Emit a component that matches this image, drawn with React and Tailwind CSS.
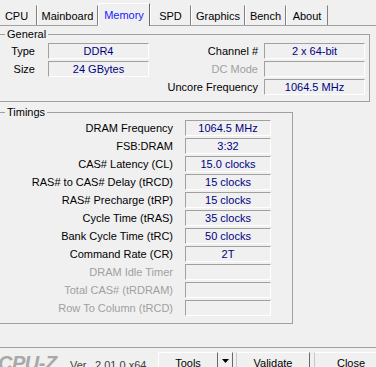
import React from "react";

const FIELD =
  "h-[16px] border border-t-[#a0a0a0] border-l-[#a0a0a0] border-b-white border-r-white text-[#000080] text-center leading-[14px] whitespace-nowrap overflow-hidden";

function Tab({ label, className, active }) {
  if (active) {
    return (
      <div
        className={
          "relative z-10 mb-[-1px] flex h-[23px] shrink-0 items-start justify-center border-t border-l border-r border-t-white border-l-white border-r-[#696969] bg-[#f0f0f0] pt-[4px] leading-[14px] text-[#1a1aff] " +
          className
        }
      >
        {label}
      </div>
    );
  }
  return (
    <div
      className={
        "flex h-[20px] shrink-0 items-start justify-center border-t border-l border-r border-t-[#f0f0f0] border-l-white border-r-[#808080] pt-[3px] leading-[14px] text-black " +
        className
      }
    >
      {label}
    </div>
  );
}

const timings = [
  ["DRAM Frequency", "1064.5 MHz"],
  ["FSB:DRAM", "3:32"],
  ["CAS# Latency (CL)", "15.0 clocks"],
  ["RAS# to CAS# Delay (tRCD)", "15 clocks"],
  ["RAS# Precharge (tRP)", "15 clocks"],
  ["Cycle Time (tRAS)", "35 clocks"],
  ["Bank Cycle Time (tRC)", "50 clocks"],
  ["Command Rate (CR)", "2T"],
  ["DRAM Idle Timer", "", true],
  ["Total CAS# (tRDRAM)", "", true],
  ["Row To Column (tRCD)", "", true],
];

export default function App() {
  return (
    <div className="h-[367px] w-[376px] overflow-hidden bg-[#f0f0f0] font-['Liberation_Sans',Arial,sans-serif] text-[11px] text-black">
      {/* Tab strip */}
      <div className="flex h-[25px] items-end">
        <Tab label="CPU" className="ml-[-6px] w-[43px] pl-[2px]" />
        <Tab label="Mainboard" className="w-[61px]" />
        <Tab label="Memory" className="w-[52px]" active />
        <Tab label="SPD" className="w-[41px]" />
        <Tab label="Graphics" className="w-[54px]" />
        <Tab label="Bench" className="w-[41px]" />
        <Tab label="About" className="w-[42px]" />
      </div>

      {/* Tab page */}
      <div className="h-[323px] border-t border-b border-t-[#a0a0a0] border-b-[#a0a0a0] pt-[8px]">
        {/* General */}
        <div className="relative ml-[-2px] w-[372px] border border-[#a0a0a0] pt-[8px] pb-[6px] pr-[4px]">
          <span className="absolute left-[6px] top-[-8px] bg-[#f0f0f0] px-[2px] leading-[14px]">
            General
          </span>
          <div className="flex flex-col gap-[2px]">
            <div className="flex h-[16px] items-center">
              <span className="w-[36px] text-right leading-[14px]">Type</span>
              <div className={FIELD + " ml-[13px] w-[101px]"}>DDR4</div>
              <span className="flex-1 pr-[6px] text-right leading-[14px]">Channel #</span>
              <div className={FIELD + " w-[101px]"}>2 x 64-bit</div>
            </div>
            <div className="flex h-[16px] items-center">
              <span className="w-[36px] text-right leading-[14px]">Size</span>
              <div className={FIELD + " ml-[13px] w-[101px]"}>24 GBytes</div>
              <span className="flex-1 pr-[6px] text-right leading-[14px] text-[#a0a0a0]">DC Mode</span>
              <div className={FIELD + " w-[101px]"}></div>
            </div>
            <div className="flex h-[16px] items-center">
              <span className="flex-1 pr-[6px] text-right leading-[14px]">Uncore Frequency</span>
              <div className={FIELD + " w-[101px]"}>1064.5 MHz</div>
            </div>
          </div>
        </div>

        {/* Timings */}
        <div className="relative ml-[-2px] mt-[10px] w-[295px] border border-[#a0a0a0] pt-[7px] pb-[7px]">
          <span className="absolute left-[6px] top-[-8px] bg-[#f0f0f0] px-[2px] leading-[14px]">
            Timings
          </span>
          <div className="flex flex-col gap-[2px]">
            {timings.map(([label, value, disabled]) => (
              <div key={label} className="flex h-[16px] items-center">
                <span
                  className={
                    "w-[174px] whitespace-nowrap text-right leading-[14px] " +
                    (disabled ? "text-[#a0a0a0]" : "text-black")
                  }
                >
                  {label}
                </span>
                <div className={FIELD + " ml-[12px] w-[86px]"}>{value}</div>
              </div>
            ))}
          </div>
        </div>
      </div>

      {/* Bottom bar */}
      <div className="flex h-[19px] items-start overflow-hidden whitespace-nowrap">
        <span className="ml-[-2px] mt-[5px] w-[60px] shrink-0 text-[20px] font-bold italic leading-[20px] tracking-[-0.5px] text-[#a8a8a8]">
          CPU-Z
        </span>
        <span className="ml-[12px] mt-[10px] w-[88px] shrink-0 leading-[14px] text-[#404040] [word-spacing:3px]">
          Ver. 2.01.0.x64
        </span>
        <div className="mt-[4px] flex h-[24px] shrink-0">
          <div className="flex w-[59px] justify-center border-t border-l border-b border-t-white border-l-white border-b-[#696969] bg-[#f0f0f0] pt-[3px] leading-[14px]">
            Tools
          </div>
          <div className="flex w-[16px] justify-center border border-t-white border-l-[#696969] border-r-[#696969] border-b-[#696969] bg-[#f0f0f0] pt-[6px]">
            <svg width="7" height="4" viewBox="0 0 7 4">
              <polygon points="0,0 7,0 3.5,4" fill="#000" />
            </svg>
          </div>
        </div>
        <div className="ml-[3px] mt-[4px] flex h-[24px] w-[74px] shrink-0 justify-center border border-t-white border-l-[#c8c8c8] border-r-[#696969] border-b-[#696969] bg-[#f0f0f0] pt-[3px] leading-[14px]">
          Validate
        </div>
        <div className="ml-[4px] mt-[4px] flex h-[24px] w-[74px] shrink-0 justify-center border border-t-white border-l-[#c8c8c8] border-r-[#696969] border-b-[#696969] bg-[#f0f0f0] pt-[3px] leading-[14px]">
          Close
        </div>
      </div>
    </div>
  );
}
